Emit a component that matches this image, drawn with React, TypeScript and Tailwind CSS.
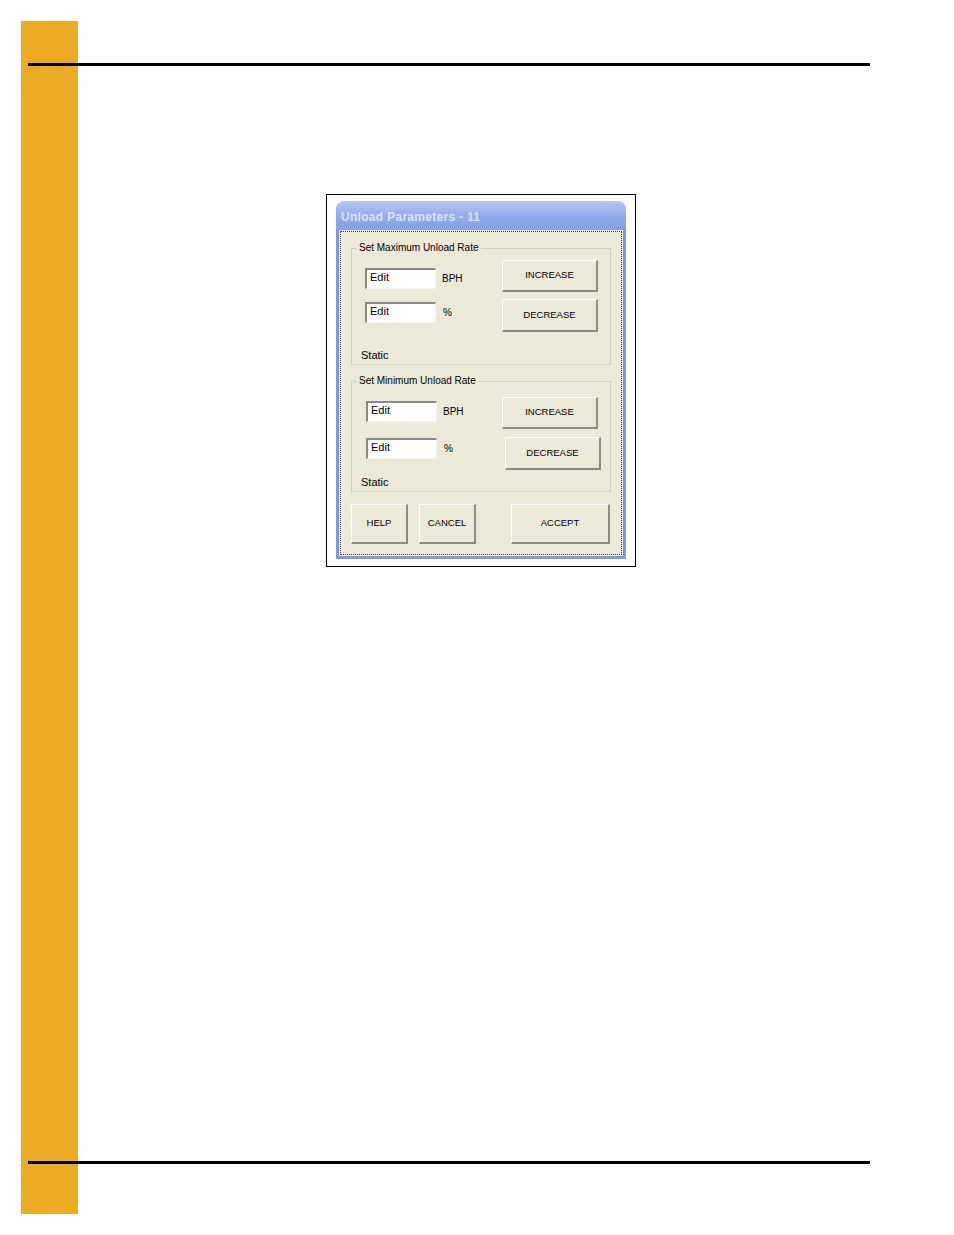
import React from 'react';

const font = { fontFamily: '"Liberation Sans", Arial, sans-serif' };

function EditBox() {
  return (
    <div className="w-[71px] h-[21px] bg-white border-t-2 border-l-2 border-b border-r border-t-[#8a8a82] border-l-[#8a8a82] border-b-[#f4f3ee] border-r-[#f4f3ee] pl-[3px] text-[11px] leading-[14px] text-black">
      Edit
    </div>
  );
}

function WinButton({ label, className }: { label: string; className: string }) {
  return (
    <div
      className={`flex items-center justify-center bg-[#ece9d8] border-t border-l border-b-2 border-r-2 border-t-white border-l-white border-b-[#8e8c80] border-r-[#8e8c80] text-[9.5px] text-black ${className}`}
    >
      {label}
    </div>
  );
}

function Group({
  title,
  variant,
}: {
  title: string;
  variant: 'max' | 'min';
}) {
  const isMax = variant === 'max';
  return (
    <div
      className={`relative border border-[#cfcdbf] ${isMax ? 'h-[117px]' : 'h-[111px]'}`}
    >
      <span className="absolute left-[5px] -top-[8px] bg-[#ece9d8] px-[2px] text-[10px] leading-[14px] text-black">
        {title}
      </span>
      {/* Row: value + increase */}
      <div className={`flex ${isMax ? 'mt-[11px]' : 'mt-[15px]'}`}>
        <div className={`w-[150px] flex items-center self-start ${isMax ? 'pl-[13px] mt-[8px]' : 'pl-[14px] mt-[4px]'}`}>
          <EditBox />
          <span className="ml-[6px] text-[10px] text-black">BPH</span>
        </div>
        <WinButton label="INCREASE" className="w-[96px] h-[32px]" />
      </div>
      {/* Row: percent + decrease */}
      <div className={`flex ${isMax ? 'mt-[7px]' : 'mt-[8px]'}`}>
        <div className={`w-[150px] flex items-center self-start ${isMax ? 'pl-[13px] mt-[3px]' : 'pl-[14px] mt-[1px]'}`}>
          <EditBox />
          <span className="ml-[7px] text-[10px] text-black">%</span>
        </div>
        <WinButton label="DECREASE" className={`w-[96px] h-[33px] ${isMax ? '' : 'ml-[3px]'}`} />
      </div>
      <div className={`pl-[9px] text-[11px] leading-[13px] text-black ${isMax ? 'mt-[17px]' : 'mt-[6px]'}`}>
        Static
      </div>
    </div>
  );
}

export default function App() {
  return (
    <div className="relative w-[954px] h-[1235px] bg-white overflow-hidden" style={font}>
      {/* Side tab */}
      <div className="absolute left-[21px] top-[21px] w-[57px] h-[1193px] bg-[#ebac23]" />

      <div className="relative pt-[63px]">
        <div className="ml-[28px] w-[842px] h-[3px] bg-black" />

        {/* Screenshot of dialog */}
        <div className="mt-[128px] ml-[326px] w-[310px] h-[373px] border border-black bg-white pt-[6px] pl-[9px]">
          <div className="w-[290px] h-[358px] flex flex-col">
            {/* Title bar */}
            <div className="h-[29px] rounded-t-[8px] bg-gradient-to-b from-[#b4c6f4] via-[#93ace9] to-[#839de3] flex items-center pl-[5px] pt-[2px]">
              <span className="text-[12px] font-bold text-[#dce6fa] tracking-[0.3px]">
                Unload Parameters - 11
              </span>
            </div>
            {/* Frame */}
            <div className="flex-1 bg-[#7f99df] px-[3px] pb-[3px]">
              <div className="h-full bg-[#ece9d8] p-[1px]">
                <div className="h-full border border-dotted border-[#3a3a8a] px-[10px] pt-[16px]">
                  <Group title="Set Maximum Unload Rate" variant="max" />
                  <div className="mt-[16px]">
                    <Group title="Set Minimum Unload Rate" variant="min" />
                  </div>
                  <div className="flex mt-[12px]">
                    <WinButton label="HELP" className="w-[57px] h-[40px]" />
                    <WinButton label="CANCEL" className="w-[57px] h-[40px] ml-[11px]" />
                    <WinButton label="ACCEPT" className="w-[99px] h-[40px] ml-[35px]" />
                  </div>
                </div>
              </div>
            </div>
          </div>
        </div>

        <div className="mt-[594px] ml-[28px] w-[842px] h-[3px] bg-black" />
      </div>
    </div>
  );
}
